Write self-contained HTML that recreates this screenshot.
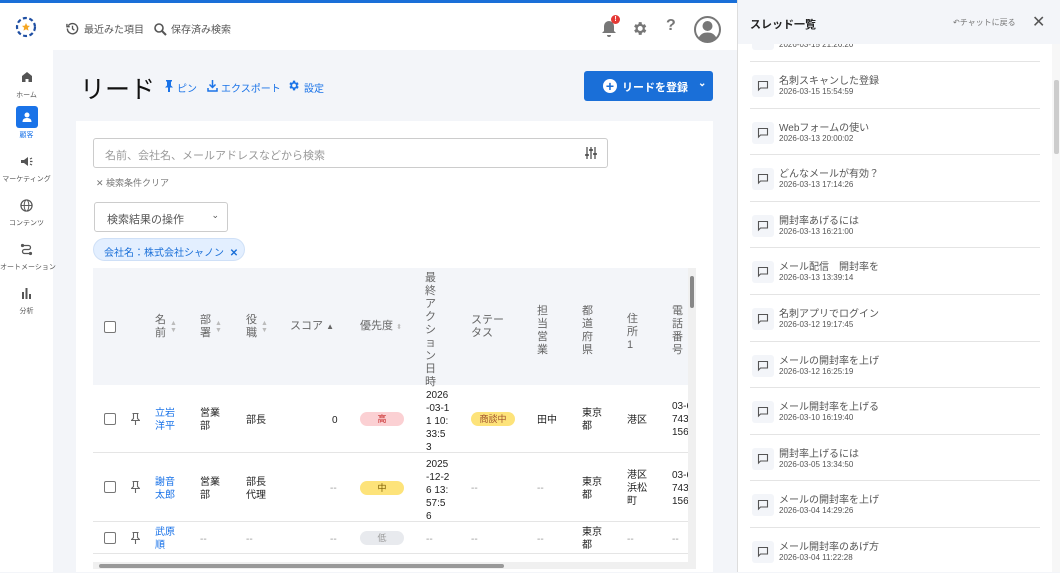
<!DOCTYPE html><html><head><meta charset="utf-8"><style>
*{box-sizing:border-box;margin:0;padding:0}
body{width:1060px;height:572px;overflow:hidden;font-family:"Liberation Sans","Noto Sans CJK JP",sans-serif;background:#f3f5f9;position:relative;color:#333}
.a{position:absolute}
.hd{left:0;top:0;width:737px;height:50px;background:#fff;border-top:3px solid #1a6fd8}
.sb{left:0;top:50px;width:53px;height:522px;background:#fff}
.nav{position:absolute;left:0;width:53px;text-align:center;font-size:7px;color:#555;white-space:nowrap}
.nav .ic{width:22px;height:22px;margin:0 auto 2px;display:flex;align-items:center;justify-content:center}
.card{left:76px;top:121px;width:637px;height:451px;background:#fff}
.th{font-size:11px;color:#666;line-height:13px}
.td{font-size:10px;line-height:13px;color:#222}
.lk{color:#1a73e8}
.cb{width:12px;height:12px;border:1px solid #777;border-radius:2px;background:#fff}
.pill{width:44px;height:14px;border-radius:7px;font-size:9px;text-align:center;line-height:14px}
.rp{left:737px;top:0;width:323px;height:572px;background:#fff;border-left:1px solid #ddd}
.it{position:absolute;left:12px;width:290px;height:46px;border-top:1px solid #e4e4e4}
.it .bx{position:absolute;left:2px;top:13px;width:22px;height:22px;background:#f3f5f9;border-radius:3px;display:flex;align-items:center;justify-content:center}
.it .t{position:absolute;left:29px;top:10px;font-size:10px;color:#555}
.it .d{position:absolute;left:29px;top:25px;font-size:8px;color:#555}
.ar{color:#bbb;font-size:7px}
</style></head><body>
<div class="a hd">
<svg class="a" style="left:14px;top:12px" width="24" height="24" viewBox="0 0 24 24"><circle cx="12" cy="12" r="9" fill="none" stroke="#1f4fa3" stroke-width="2.2" stroke-dasharray="4 2.5"/><path d="M12 8l1.2 2.6 2.8.3-2.1 1.9.6 2.8-2.5-1.4-2.5 1.4.6-2.8-2.1-1.9 2.8-.3z" fill="#f5a623"/></svg>
<svg class="a" style="left:66px;top:19px" width="13" height="13" viewBox="0 0 14 14"><path d="M2.5 4A5.5 5.5 0 1 1 1.5 7" fill="none" stroke="#555" stroke-width="1.5"/><path d="M1 2v3h3" fill="none" stroke="#555" stroke-width="1.5"/><path d="M7 4v3.3l2 1.5" fill="none" stroke="#555" stroke-width="1.4"/></svg>
<div class="a" style="left:84px;top:18px;font-size:10px;color:#555">最近みた項目</div>
<svg class="a" style="left:153px;top:19px" width="14" height="14" viewBox="0 0 14 14"><circle cx="6" cy="6" r="4" fill="none" stroke="#555" stroke-width="1.6"/><path d="M9 9l4 4" stroke="#555" stroke-width="2"/></svg>
<div class="a" style="left:171px;top:18px;font-size:10px;color:#555">保存済み検索</div>
<svg class="a" style="left:601px;top:17px" width="16" height="18" viewBox="0 0 16 18"><path d="M8 1a5 5 0 0 0-5 5v5l-2 2h14l-2-2V6a5 5 0 0 0-5-5zM6 15a2 2 0 0 0 4 0z" fill="#777"/></svg>
<div class="a" style="left:611px;top:12px;width:9px;height:9px;border-radius:50%;background:#e53935;color:#fff;font-size:7px;text-align:center;line-height:9px;font-weight:bold">!</div>
<svg class="a" style="left:631px;top:17px" width="17" height="17" viewBox="0 0 24 24"><path fill="#777" d="M19.4 13a7.5 7.5 0 0 0 0-2l2.1-1.6-2-3.5-2.5 1a7 7 0 0 0-1.700-1L15 3h-4l-.4 2.9a7 7 0 0 0-1.7 1l-2.5-1-2 3.5L6.6 11a7.5 7.5 0 0 0 0 2l-2.1 1.6 2 3.5 2.5-1a7 7 0 0 0 1.7 1L11 21h4l.4-2.9a7 7 0 0 0 1.7-1l2.5 1 2-3.5zM13 15.5a3.5 3.5 0 1 1 0-7 3.5 3.5 0 0 1 0 7z"/></svg>
<div class="a" style="left:666px;top:14px;font-size:16px;color:#777;font-weight:bold">?</div>
<svg class="a" style="left:694px;top:13px" width="27" height="27" viewBox="0 0 27 27"><circle cx="13.5" cy="13.5" r="12.5" fill="#fff" stroke="#777" stroke-width="2"/><circle cx="13.5" cy="10" r="5" fill="#777"/><path d="M4.5 22c2-4 5-5.5 9-5.5s7 1.5 9 5.5a12 12 0 0 1-18 0z" fill="#777"/></svg>
</div>
<div class="a sb">
<div class="nav" style="top:16px"><div class="ic"><svg width="12" height="12" viewBox="0 0 12 12"><path d="M6 1L1 5v6h3.5V8h3v3H11V5z" fill="#555"/></svg></div>ホーム</div>
<div class="nav" style="top:56px;color:#1a73e8"><div class="ic" style="background:#1a73e8;border-radius:3px"><svg width="12" height="12" viewBox="0 0 12 12"><circle cx="6" cy="4" r="2.5" fill="#fff"/><path d="M1.5 11c0-3 2-4 4.5-4s4.5 1 4.5 4z" fill="#fff"/></svg></div>顧客</div>
<div class="nav" style="top:100px"><div class="ic"><svg width="13" height="11" viewBox="0 0 13 11"><path d="M1 4h3l4-3v9L4 7H1z" fill="#555"/><path d="M10 3l2-1M10 5.5h2.5M10 8l2 1" stroke="#555" stroke-width="1.2"/></svg></div>マーケティング</div>
<div class="nav" style="top:144px"><div class="ic"><svg width="13" height="13" viewBox="0 0 14 14"><circle cx="7" cy="7" r="6" fill="none" stroke="#555" stroke-width="1.3"/><ellipse cx="7" cy="7" rx="2.5" ry="6" fill="none" stroke="#555"/><path d="M1 7h12" stroke="#555"/></svg></div>コンテンツ</div>
<div class="nav" style="top:188px"><div class="ic"><svg width="13" height="13" viewBox="0 0 13 13"><circle cx="2.5" cy="2.5" r="1.6" fill="#555"/><circle cx="10.5" cy="10.5" r="1.6" fill="#555"/><path d="M2.5 2.5h6a2 2 0 0 1 0 4h-4a2 2 0 0 0 0 4h6" fill="none" stroke="#555" stroke-width="1.3"/></svg></div>オートメーション</div>
<div class="nav" style="top:232px"><div class="ic"><svg width="11" height="11" viewBox="0 0 11 11"><path d="M1 4h2v7H1zM4.5 0h2v11h-2zM8 6h2v5H8z" fill="#555"/></svg></div>分析</div>
</div>
<div class="a" style="left:80px;top:70px;font-size:25px;color:#111">リード</div>
<svg class="a" style="left:164px;top:80px" width="10" height="12" viewBox="0 0 10 12"><path d="M2 0h6v1.5H7v4l2 2H6v4.5H4V7.5H1l2-2v-4H2z" fill="#1a73e8"/></svg>
<div class="a" style="left:177px;top:80px;font-size:10px;color:#1a73e8">ピン</div>
<svg class="a" style="left:207px;top:80px" width="11" height="12" viewBox="0 0 11 12"><path d="M5.5 0v7M2.5 4.5l3 3 3-3M1 8v3h9V8" fill="none" stroke="#1a73e8" stroke-width="1.5"/></svg>
<div class="a" style="left:221px;top:80px;font-size:10px;color:#1a73e8">エクスポート</div>
<svg class="a" style="left:287px;top:79px" width="13" height="13" viewBox="0 0 24 24"><path fill="#1a73e8" d="M19.4 13a7.5 7.5 0 0 0 0-2l2.1-1.6-2-3.5-2.5 1a7 7 0 0 0-1.7-1L15 3h-4l-.4 2.9a7 7 0 0 0-1.7 1l-2.5-1-2 3.5L6.6 11a7.5 7.5 0 0 0 0 2l-2.1 1.6 2 3.5 2.5-1a7 7 0 0 0 1.7 1L11 21h4l.4-2.9a7 7 0 0 0 1.7-1l2.5 1 2-3.5zM13 15.5a3.5 3.5 0 1 1 0-7 3.5 3.5 0 0 1 0 7z"/></svg>
<div class="a" style="left:304px;top:80px;font-size:10px;color:#1a73e8">設定</div>
<div class="a" style="left:584px;top:71px;width:129px;height:30px;background:#1a6fd8;border-radius:3px;color:#fff;font-size:11px;font-weight:bold">
<div class="a" style="left:19px;top:8px;width:14px;height:14px;border-radius:50%;background:#fff;color:#1a6fd8;text-align:center;line-height:14px;font-size:14px">+</div>
<div class="a" style="left:38px;top:8px">リードを登録</div><div class="a" style="left:114px;top:7px;font-size:10px">⌄</div></div>
<div class="a card"></div>
<div class="a" style="left:93px;top:138px;width:515px;height:30px;border:1px solid #ccc;border-radius:3px;background:#fff;font-size:11px;color:#999;padding:8px 11px">名前、会社名、メールアドレスなどから検索
<svg class="a" style="right:10px;top:8px" width="12" height="12" viewBox="0 0 12 12"><path d="M2 0v12M6 0v12M10 0v12" stroke="#444" stroke-width="1.2"/><path d="M0 8h4M4 3h4M8 7h4" stroke="#444" stroke-width="1.6"/></svg></div>
<div class="a" style="left:96px;top:176px;font-size:9px;color:#777">✕ 検索条件クリア</div>
<div class="a" style="left:94px;top:202px;width:134px;height:30px;border:1px solid #ccc;border-radius:3px;background:#fff;font-size:11px;color:#555;padding:8px 12px">検索結果の操作<span style="position:absolute;right:8px;top:7px;font-size:9px">⌄</span></div>
<div class="a" style="left:93px;top:238px;width:152px;height:23px;border-radius:12px;background:#e3efff;border:1px solid #cfe0f7;font-size:10px;color:#1a6fd8;padding:5px 10px;white-space:nowrap">会社名：株式会社シャノン <b style="margin-left:3px">✕</b></div>
<div class="a" style="left:93px;top:268px;width:595px;height:117px;background:#f3f5f9"></div>
<div class="a cb" style="left:104px;top:321px"></div>
<div class="a th" style="left:155px;top:314px">名<br>前</div><div class="a ar" style="left:170px;top:320px">▲<br>▼</div>
<div class="a th" style="left:200px;top:314px">部<br>署</div><div class="a ar" style="left:215px;top:320px">▲<br>▼</div>
<div class="a th" style="left:246px;top:314px">役<br>職</div><div class="a ar" style="left:261px;top:320px">▲<br>▼</div>
<div class="a th" style="left:290px;top:320px">スコア <span style="color:#666;font-size:8px">▲</span></div>
<div class="a th" style="left:360px;top:320px">優先度 <span class="ar">⬍</span></div>
<div class="a th" style="left:425px;top:272px;width:12px">最終アクション日時</div>
<div class="a th" style="left:471px;top:314px">ステー<br>タス</div>
<div class="a th" style="left:537px;top:305px;width:12px">担当営業</div>
<div class="a th" style="left:582px;top:305px;width:12px">都道府県</div>
<div class="a th" style="left:627px;top:313px;width:12px">住所1</div>
<div class="a th" style="left:672px;top:305px;width:12px">電話番号</div>
<div class="a" style="left:93px;top:452px;width:595px;height:1px;background:#e5e5e5"></div>
<div class="a" style="left:93px;top:521px;width:595px;height:1px;background:#e5e5e5"></div>
<div class="a" style="left:93px;top:553px;width:595px;height:1px;background:#e5e5e5"></div>
<div class="a cb" style="left:104px;top:413px"></div><div class="a cb" style="left:104px;top:481px"></div><div class="a cb" style="left:104px;top:532px"></div>
<svg class="a" style="left:131px;top:413px" width="9" height="12" viewBox="0 0 9 12"><path d="M1.5.5h6M2.5.5v5l-2 2h8l-2-2v-5M4.5 7.5V12" fill="none" stroke="#666" stroke-width="1.1"/></svg>
<svg class="a" style="left:131px;top:481px" width="9" height="12" viewBox="0 0 9 12"><path d="M1.5.5h6M2.5.5v5l-2 2h8l-2-2v-5M4.5 7.5V12" fill="none" stroke="#666" stroke-width="1.1"/></svg>
<svg class="a" style="left:131px;top:532px" width="9" height="12" viewBox="0 0 9 12"><path d="M1.5.5h6M2.5.5v5l-2 2h8l-2-2v-5M4.5 7.5V12" fill="none" stroke="#666" stroke-width="1.1"/></svg>
<div class="a td lk" style="left:155px;top:407px">立岩<br>洋平</div><div class="a td lk" style="left:155px;top:476px">謝音<br>太郎</div><div class="a td lk" style="left:155px;top:526px">武原<br>順</div>
<div class="a td" style="left:200px;top:407px">営業<br>部</div><div class="a td" style="left:200px;top:476px">営業<br>部</div><div class="a td" style="left:200px;top:533px;color:#999">--</div>
<div class="a td" style="left:246px;top:414px">部長</div><div class="a td" style="left:246px;top:476px">部長<br>代理</div><div class="a td" style="left:246px;top:533px;color:#999">--</div>
<div class="a td" style="left:332px;top:414px">0</div><div class="a td" style="left:330px;top:482px;color:#999">--</div><div class="a td" style="left:330px;top:533px;color:#999">--</div>
<div class="a pill" style="left:360px;top:412px;background:#fbd0d3;color:#c62828">高</div>
<div class="a pill" style="left:360px;top:481px;background:#fde37a;color:#7a5b00">中</div>
<div class="a pill" style="left:360px;top:531px;background:#e8eaee;color:#999">低</div>
<div class="a td" style="left:426px;top:389px;width:30px">2026<br>-03-1<br>1 10:<br>33:5<br>3</div>
<div class="a td" style="left:426px;top:458px;width:30px">2025<br>-12-2<br>6 13:<br>57:5<br>6</div>
<div class="a td" style="left:426px;top:533px;color:#999">--</div>
<div class="a pill" style="left:471px;top:412px;background:#fde37a;color:#a0522d">商談中</div>
<div class="a td" style="left:471px;top:482px;color:#999">--</div><div class="a td" style="left:471px;top:533px;color:#999">--</div>
<div class="a td" style="left:537px;top:414px">田中</div><div class="a td" style="left:537px;top:482px;color:#999">--</div><div class="a td" style="left:537px;top:533px;color:#999">--</div>
<div class="a td" style="left:582px;top:407px">東京<br>都</div><div class="a td" style="left:582px;top:476px">東京<br>都</div><div class="a td" style="left:582px;top:526px">東京<br>都</div>
<div class="a td" style="left:627px;top:414px">港区</div><div class="a td" style="left:627px;top:469px">港区<br>浜松<br>町</div><div class="a td" style="left:627px;top:533px;color:#999">--</div>
<div class="a td" style="left:672px;top:400px;width:16px;overflow:hidden;white-space:nowrap">03-6<br>743<br>156</div>
<div class="a td" style="left:672px;top:469px;width:16px;overflow:hidden;white-space:nowrap">03-6<br>743<br>156</div>
<div class="a td" style="left:672px;top:533px;color:#999">--</div>
<div class="a" style="left:688px;top:268px;width:8px;height:300px;background:#f0f0f0"></div>
<div class="a" style="left:690px;top:276px;width:4px;height:32px;background:#888;border-radius:2px"></div>
<div class="a" style="left:93px;top:562px;width:603px;height:7px;background:#f0f0f0"></div>
<div class="a" style="left:99px;top:564px;width:405px;height:4px;background:#999;border-radius:2px"></div>
<div class="a rp">
<div class="a" style="left:0;top:0;width:323px;height:44px;background:#f3f5f9"></div>
<div class="a" style="left:12px;top:16px;font-size:11px;font-weight:bold;color:#222">スレッド一覧</div>
<div class="a" style="left:215px;top:17px;font-size:8px;color:#777">↶チャットに戻る</div>
<div class="a" style="left:294px;top:12px;font-size:16px;color:#555">✕</div>
<div class="a" style="left:314px;top:44px;width:8px;height:528px;background:#f7f7f7"></div>
<div class="a" style="left:316px;top:80px;width:5px;height:74px;background:#ccc;border-radius:2px"></div>
<div class="a" style="left:12px;top:44px;width:290px;height:16px;overflow:hidden"><div class="a" style="left:29px;top:-4px;font-size:8px;color:#555">2026-03-15 21:26:20</div><div class="a" style="left:2px;top:-10px;width:22px;height:16px;background:#f3f5f9;border-radius:3px"></div></div>
</div>
<script>
var d=[["名刺スキャンした登録","2026-03-15 15:54:59"],["Webフォームの使い","2026-03-13 20:00:02"],["どんなメールが有効？","2026-03-13 17:14:26"],["開封率あげるには","2026-03-13 16:21:00"],["メール配信　開封率を","2026-03-13 13:39:14"],["名刺アプリでログイン","2026-03-12 19:17:45"],["メールの開封率を上げ","2026-03-12 16:25:19"],["メール開封率を上げる","2026-03-10 16:19:40"],["開封率上げるには","2026-03-05 13:34:50"],["メールの開封率を上げ","2026-03-04 14:29:26"],["メール開封率のあげ方","2026-03-04 11:22:28"]];
var rp=document.querySelector('.rp'),h='';
d.forEach(function(x,i){h+='<div class="it" style="top:'+(61+i*46.6)+'px"><div class="bx"><svg width="12" height="12" viewBox="0 0 12 12"><path d="M1.5 1.5h9v6.5h-7l-2 2z" fill="none" stroke="#555" stroke-width="1.1"/></svg></div><div class="t">'+x[0]+'</div><div class="d">'+x[1]+'</div></div>';});
rp.insertAdjacentHTML('beforeend',h);
</script>
</body></html>
